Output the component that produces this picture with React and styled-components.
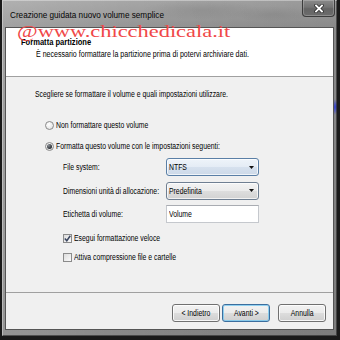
import React from "react";
import styled, { createGlobalStyle } from "styled-components";

const Global = createGlobalStyle`
  *, *::before, *::after { box-sizing: border-box; }
  html, body { margin: 0; padding: 0; background: #161616; }
  body {
    width: 340px; height: 340px; overflow: hidden;
    font-family: "Liberation Sans", Arial, sans-serif; color: #000;
  }
`;

const Screen = styled.div`
  position: relative;
  width: 340px; height: 340px;
  padding: 0 3px 4px 2px;
  background: #1a1a1a;
  display: flex;
`;

const Window = styled.div`
  flex: 1;
  display: flex; flex-direction: column;
  padding: 0 3px 6px 3px;
  background:
    radial-gradient(3px 8px at 333px 107px, rgba(40, 55, 215, 0.95), rgba(40, 55, 215, 0)),
    radial-gradient(60px 10px at 200px 10px, rgba(0,0,0,0.07), rgba(0,0,0,0)),
    radial-gradient(40px 8px at 270px 14px, rgba(0,0,0,0.06), rgba(0,0,0,0)),
    linear-gradient(to right, rgba(255,255,255,0.12), rgba(0,0,0,0) 40%, rgba(0,0,0,0.08)),
    linear-gradient(to bottom, #a6a6a6 0, #959595 27px, #8d8d8d 60%, #878787 100%);
  box-shadow: inset 1px 1px 0 rgba(255,255,255,0.35), inset -1px -1px 0 rgba(0,0,0,0.45);
`;

const TitleBar = styled.div`
  height: 27px; flex: none;
  display: flex; align-items: flex-start; justify-content: space-between;
  padding-left: 5px;
`;

const UiText = styled.span`
  display: inline-block;
  white-space: nowrap;
  font-size: 8.5px;
  line-height: 12px;
  transform: scaleX(${(p) => p.$sx || 0.807});
  transform-origin: ${(p) => (p.$center ? "center" : "left")} center;
  font-weight: ${(p) => (p.$bold ? 700 : 400)};
`;

const TitleText = styled(UiText)`
  margin-top: 9px;
  font-size: 9.5px;
  color: #050505;
`;

const CloseButton = styled.div`
  width: 33px; height: 17px; margin: 0 -1px 0 0;
  border: 1px solid #3c3c3c; border-top: none; border-radius: 0 0 4px 4px;
  background: linear-gradient(#8a8a8a, #737373 45%, #646464 55%, #6c6c6c);
  box-shadow: inset 0 0 0 1px rgba(255,255,255,0.22);
  display: flex; align-items: center; justify-content: center;
`;

const Client = styled.div`
  flex: 1;
  display: flex; flex-direction: column;
  border: 1px solid #555;
  background: #f0f0f0;
`;

const Header = styled.div`
  height: 49px; flex: none;
  background: #fff;
  border-bottom: 1px solid #a0a0a0;
  padding: 8px 0 0 15px;
  display: flex; flex-direction: column; align-items: flex-start;
`;

const SubTitle = styled(UiText)`
  margin-left: 15px;
`;

const Body = styled.div`
  flex: 1;
  padding: 11px 0 0 29px;
  display: flex; flex-direction: column; align-items: flex-start;
`;

const OptionRow = styled.label`
  display: flex; align-items: center; gap: 2px;
  height: 12px;
  margin-left: ${(p) => p.$indent || 0}px;
  margin-top: ${(p) => p.$top || 0}px;
`;

const Radio = styled.span`
  width: 9px; height: 9px; flex: none;
  border-radius: 50%;
  border: 1px solid #8a8a8a;
  background: radial-gradient(circle at 40% 35%, #ffffff, #dcdcdc);
  display: flex; align-items: center; justify-content: center;
  &::after {
    content: "";
    display: ${(p) => (p.$checked ? "block" : "none")};
    width: 5px; height: 5px; border-radius: 50%;
    background: radial-gradient(circle at 35% 30%, #8a8f95, #2b2f35 70%);
  }
`;

const Check = styled.span`
  width: 9px; height: 9px; flex: none;
  border: 1px solid #8b8b8b;
  background: linear-gradient(135deg, #dcdcdc, #fafafa);
  display: flex; align-items: center; justify-content: center;
`;

const Fields = styled.div`
  margin: 6px 0 0 28px;
  display: grid;
  grid-template-columns: 103px 93px;
  grid-auto-rows: 18px;
  row-gap: 5.5px;
  align-items: center;
`;

const Combo = styled.div`
  height: 18px;
  border: 1px solid ${(p) => (p.$hot ? "#5a7fa6" : "#6f7f92")};
  border-radius: 3px;
  background: ${(p) =>
    p.$hot
      ? "linear-gradient(#eef4fa, #e4ecf5 50%, #d6e1ee 50%, #cdd9e8)"
      : "linear-gradient(#f3f3f3, #ebebeb 50%, #dedede 50%, #d2d2d2)"};
  box-shadow: inset 0 0 0 1px rgba(255,255,255,0.7);
  display: flex; align-items: center; justify-content: space-between;
  padding: 0 4px 0 2px;
`;

const TextBox = styled.div`
  height: 18px;
  border: 1px solid #c5c8cd;
  border-top-color: #a9acb2;
  background: #fff;
  display: flex; align-items: center;
  padding: 0 2px;
`;

const Footer = styled.div`
  height: 37px; flex: none;
  border-top: 1px solid #a0a0a0;
  padding: 11px 7px 0 0;
  display: flex; justify-content: flex-end; align-items: flex-start;
`;

const Button = styled.div`
  width: 48px; height: 18px;
  margin-right: ${(p) => p.$gap || 0}px;
  border: 1px solid ${(p) => (p.$default ? "#3c6e9e" : "#707070")};
  border-radius: 3px;
  background: linear-gradient(#f2f2f2, #ebebeb 50%, #dddddd 50%, #cfcfcf);
  box-shadow: inset 0 0 0 1px ${(p) => (p.$default ? "rgba(120,200,240,0.8)" : "rgba(255,255,255,0.8)")};
  display: flex; align-items: center; justify-content: center;
`;

const Watermark = styled.div`
  position: absolute;
  left: 17px; top: 24px;
  font-family: "Liberation Serif", "Times New Roman", serif;
  font-size: 16px; line-height: 16px;
  color: #f04848;
  white-space: nowrap;
  transform: scaleX(1.4);
  transform-origin: left center;
  pointer-events: none;
`;

const CloseGlyph = () => (
  <svg width="10" height="9" viewBox="0 0 10 9">
    <path d="M2 1.5 L8 7.5 M8 1.5 L2 7.5" stroke="#2e2e2e" strokeWidth="3.4" strokeLinecap="square" />
    <path d="M2 1.5 L8 7.5 M8 1.5 L2 7.5" stroke="#ffffff" strokeWidth="1.8" strokeLinecap="square" />
  </svg>
);

const Arrow = () => (
  <svg width="5" height="3" viewBox="0 0 5 3">
    <path d="M0 0 L5 0 L2.5 3 Z" fill="#111" />
  </svg>
);

const Tick = () => (
  <svg width="7" height="7" viewBox="0 0 7 7">
    <path d="M0.8 3.6 L2.8 5.8 L6.3 0.8" fill="none" stroke="#3a4660" strokeWidth="1.5" />
  </svg>
);

export default function App() {
  return (
    <>
      <Global />
      <Screen>
        <Window>
          <TitleBar>
            <TitleText $sx={0.86}>Creazione guidata nuovo volume semplice</TitleText>
            <CloseButton>
              <CloseGlyph />
            </CloseButton>
          </TitleBar>
          <Client>
            <Header>
              <UiText $bold $sx={0.89}>Formatta partizione</UiText>
              <SubTitle $sx={0.83}>
                È necessario formattare la partizione prima di potervi archiviare dati.
              </SubTitle>
            </Header>
            <Body>
              <UiText>Scegliere se formattare il volume e quali impostazioni utilizzare.</UiText>
              <OptionRow $indent={10} $top={19}>
                <Radio />
                <UiText>Non formattare questo volume</UiText>
              </OptionRow>
              <OptionRow $indent={10} $top={9}>
                <Radio $checked />
                <UiText>Formatta questo volume con le impostazioni seguenti:</UiText>
              </OptionRow>
              <Fields>
                <UiText>File system:</UiText>
                <Combo $hot>
                  <UiText>NTFS</UiText>
                  <Arrow />
                </Combo>
                <UiText>Dimensioni unità di allocazione:</UiText>
                <Combo>
                  <UiText>Predefinita</UiText>
                  <Arrow />
                </Combo>
                <UiText>Etichetta di volume:</UiText>
                <TextBox>
                  <UiText>Volume</UiText>
                </TextBox>
              </Fields>
              <OptionRow $indent={28} $top={9}>
                <Check>
                  <Tick />
                </Check>
                <UiText>Esegui formattazione veloce</UiText>
              </OptionRow>
              <OptionRow $indent={28} $top={7}>
                <Check />
                <UiText>Attiva compressione file e cartelle</UiText>
              </OptionRow>
            </Body>
            <Footer>
              <Button $gap={2}>
                <UiText $center>&lt; Indietro</UiText>
              </Button>
              <Button $gap={8} $default>
                <UiText $center>Avanti &gt;</UiText>
              </Button>
              <Button>
                <UiText $center>Annulla</UiText>
              </Button>
            </Footer>
          </Client>
        </Window>
        <Watermark>@www.chicchedicala.it</Watermark>
      </Screen>
    </>
  );
}
